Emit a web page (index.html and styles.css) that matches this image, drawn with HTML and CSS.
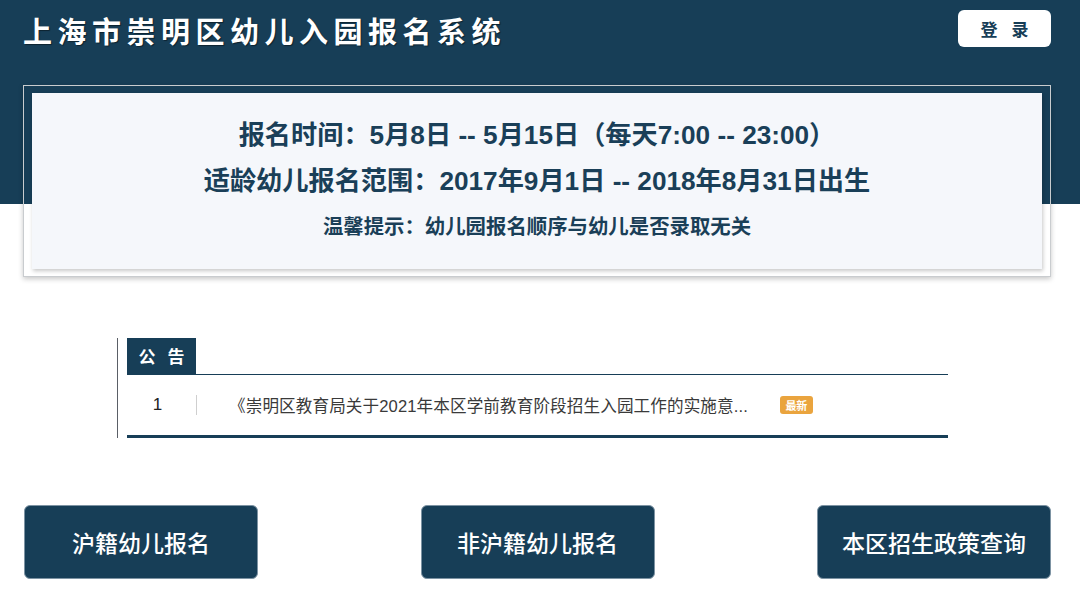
FILE: index.html
```html
<!DOCTYPE html>
<html lang="zh-CN">
<head>
<meta charset="utf-8">
<title>上海市崇明区幼儿入园报名系统</title>
<link rel="stylesheet" href="styles.css">
</head>
<body>
<div class="page">
  <div class="topbar">
    <div class="title">上海市崇明区幼儿入园报名系统</div>
    <div class="login">登 录</div>
  </div>
  <div class="frame">
    <div class="card">
      <div class="line big">报名时间：5月8日 -- 5月15日（每天7:00 -- 23:00）</div>
      <div class="line big">适龄幼儿报名范围：2017年9月1日 -- 2018年8月31日出生</div>
      <div class="line small">温馨提示：幼儿园报名顺序与幼儿是否录取无关</div>
    </div>
  </div>
  <div class="notice">
    <div class="notice-head"><span class="tab">公 告</span></div>
    <div class="notice-row">
      <span class="num">1</span>
      <span class="ntext">《崇明区教育局关于2021年本区学前教育阶段招生入园工作的实施意...</span>
      <span class="badge">最新</span>
    </div>
  </div>
  <div class="actions">
    <div class="btn">沪籍幼儿报名</div>
    <div class="btn">非沪籍幼儿报名</div>
    <div class="btn">本区招生政策查询</div>
  </div>
</div>
</body>
</html>
```

FILE: styles.css
```css
* { box-sizing: border-box; }
html, body { margin: 0; padding: 0; }
body {
  font-family: "Liberation Sans", "Noto Sans CJK SC", sans-serif;
  background: #fff;
}
.page {
  width: 1080px;
  min-height: 607px;
  background: linear-gradient(#173e57 0, #173e57 204px, #ffffff 204px);
  overflow: hidden;
}
.topbar {
  display: flex;
  justify-content: space-between;
  align-items: flex-start;
  height: 85px;
  padding: 10px 29px 0 23px;
}
.title {
  font-family: "Noto Sans CJK SC", sans-serif;
  font-weight: 700;
  font-size: 29px;
  line-height: 40px;
  letter-spacing: 5.5px;
  color: #fff;
  text-shadow: 1px 1px 1px rgba(0,0,0,0.45);
}
.login {
  width: 93px;
  height: 37px;
  line-height: 37px;
  background: #fff;
  border-radius: 6px;
  text-align: center;
  font-family: "Noto Sans CJK SC", sans-serif;
  font-weight: 700;
  font-size: 17px;
  letter-spacing: 5px;
  padding-left: 5px;
  color: #173e57;
}
.frame {
  margin: 0 29px 0 23px;
  border: 1px solid #c9cccf;
  padding: 7px 8px;
  box-shadow: 0 2px 5px rgba(0,0,0,0.22);
}
.card {
  background: #f5f7fb;
  padding: 19px 0;
  box-shadow: 1px 2px 4px rgba(0,0,0,0.22);
  text-align: center;
  color: #1a3f58;
  font-weight: 700;
}
.line { line-height: 46px; white-space: nowrap; }
.big { font-size: 26.2px; }
.small { font-size: 20.4px; }
.notice {
  margin: 61px 0 0 117px;
  width: 831px;
  border-left: 1px solid #5a5f66;
  padding-left: 9px;
}
.notice-head {
  height: 37px;
  border-bottom: 1px solid #173e57;
  display: flex;
}
.tab {
  width: 69px;
  height: 36px;
  line-height: 36px;
  background: #173e57;
  color: #fff;
  text-align: center;
  font-family: "Noto Sans CJK SC", sans-serif;
  font-weight: 700;
  font-size: 17px;
  letter-spacing: 4px;
  padding-left: 4px;
}
.notice-row {
  height: 63px;
  border-bottom: 3px solid #173e57;
  display: flex;
  align-items: center;
}
.num {
  width: 70px;
  height: 20px;
  line-height: 20px;
  border-right: 1px solid #cfcfcf;
  text-align: center;
  padding-right: 8px;
  font-size: 17px;
  color: #222;
}
.ntext {
  padding-left: 32px;
  font-size: 16.6px;
  color: #3a3a3a;
  white-space: nowrap;
  letter-spacing: 0.1px;
}
.badge {
  margin-left: 32px;
  width: 33px;
  height: 18px;
  line-height: 18px;
  background: #eaa43e;
  border-radius: 3px;
  color: #fff;
  font-size: 11px;
  font-weight: 700;
  text-align: center;
  font-family: "Noto Sans CJK SC", sans-serif;
}
.actions {
  display: flex;
  justify-content: space-between;
  padding: 0 29px 0 24px;
  margin-top: 67px;
}
.btn {
  width: 234px;
  height: 74px;
  line-height: 72px;
  background: #173e57;
  border: 1px solid #7d93a3;
  border-radius: 6px;
  color: #fff;
  text-align: center;
  font-size: 23px;
  font-family: "Noto Sans CJK SC", sans-serif;
  font-weight: 500;
}
```
